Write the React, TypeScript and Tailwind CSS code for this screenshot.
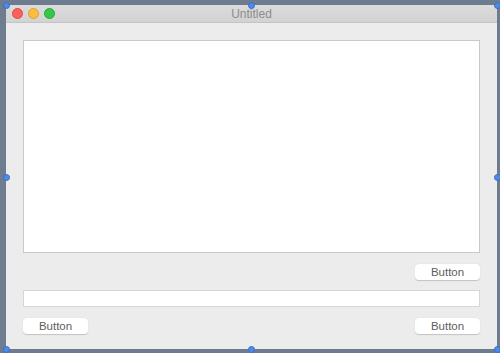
import React from "react";

const Handle = ({ className }: { className: string }) => (
  <div className={"absolute w-[7px] h-[7px] -ml-[3.5px] -mt-[3.5px] rounded-full bg-[#4f8ae8] border border-[#3a6fc9] " + className} />
);

const MacButton = ({ label }: { label: string }) => (
  <button className="h-[16px] w-[65px] rounded-[4px] bg-white shadow-[0_0.5px_1px_rgba(0,0,0,0.18)] text-[11.5px] leading-[16px] text-[#5e5e5e]">
    {label}
  </button>
);

export default function App() {
  return (
    <div className="relative w-[500px] h-[353px] bg-[#6d7c8e] pl-[6px] pt-[5px] overflow-hidden" style={{ fontFamily: "'Liberation Sans', Arial, sans-serif" }}>
      <div className="w-[491px] h-[344px] bg-[#ececec] rounded-t-[5px] flex flex-col">
        <div className="relative h-[18px] rounded-t-[5px] bg-gradient-to-b from-[#dcdcdc] to-[#d2d2d2] border-b border-[#c4c4c4] flex items-center pl-[6px] gap-[5px]">
          <span className="w-[11px] h-[11px] rounded-full bg-[#fc605c] border border-[#e5463f]" />
          <span className="w-[11px] h-[11px] rounded-full bg-[#fdbc40] border border-[#dea22c]" />
          <span className="w-[11px] h-[11px] rounded-full bg-[#34c84a] border border-[#24a935]" />
          <div className="absolute inset-0 flex items-center justify-center text-[12px] pt-[1px] text-[#8c8c8c]">Untitled</div>
        </div>
        <div className="flex flex-col px-[17px] pt-[17px]">
          <div className="h-[213px] bg-white border border-[#c9c9c9]" />
          <div className="flex justify-end mt-[11px]">
            <MacButton label="Button" />
          </div>
          <div className="mt-[10px] h-[17px] bg-white border border-[#d6d6d6]" />
          <div className="flex justify-between mt-[11px]">
            <MacButton label="Button" />
            <MacButton label="Button" />
          </div>
        </div>
      </div>
      <Handle className="left-[6px] top-[5px]" />
      <Handle className="left-[251px] top-[5px]" />
      <Handle className="left-[497px] top-[5px]" />
      <Handle className="left-[6px] top-[177px]" />
      <Handle className="left-[497px] top-[177px]" />
      <Handle className="left-[6px] top-[349px]" />
      <Handle className="left-[251px] top-[349px]" />
      <Handle className="left-[497px] top-[349px]" />
    </div>
  );
}
